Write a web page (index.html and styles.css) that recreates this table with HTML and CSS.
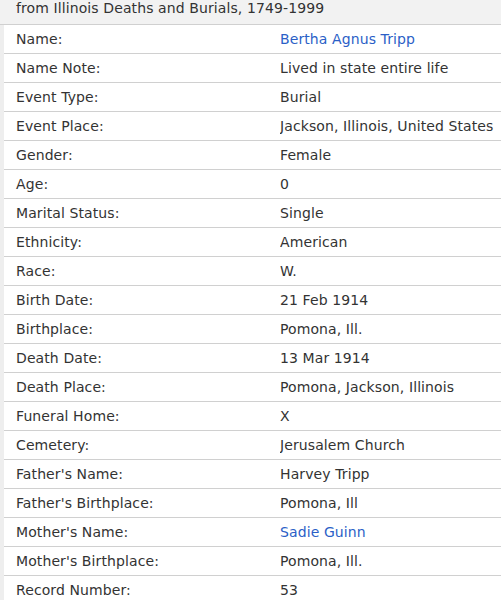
FILE: index.html
```html
<!DOCTYPE html>
<html>
<head>
<meta charset="utf-8">
<link rel="stylesheet" href="styles.css">
</head>
<body>
<div class="record">
  <div class="header">from Illinois Deaths and Burials, 1749-1999</div>
  <div class="rows">
    <div class="row"><div class="label">Name:</div><div class="value"><a class="link" href="#">Bertha Agnus Tripp</a></div></div>
    <div class="row"><div class="label">Name Note:</div><div class="value">Lived in state entire life</div></div>
    <div class="row"><div class="label">Event Type:</div><div class="value">Burial</div></div>
    <div class="row"><div class="label">Event Place:</div><div class="value">Jackson, Illinois, United States</div></div>
    <div class="row"><div class="label">Gender:</div><div class="value">Female</div></div>
    <div class="row"><div class="label">Age:</div><div class="value">0</div></div>
    <div class="row"><div class="label">Marital Status:</div><div class="value">Single</div></div>
    <div class="row"><div class="label">Ethnicity:</div><div class="value">American</div></div>
    <div class="row"><div class="label">Race:</div><div class="value">W.</div></div>
    <div class="row"><div class="label">Birth Date:</div><div class="value">21 Feb 1914</div></div>
    <div class="row"><div class="label">Birthplace:</div><div class="value">Pomona, Ill.</div></div>
    <div class="row"><div class="label">Death Date:</div><div class="value">13 Mar 1914</div></div>
    <div class="row"><div class="label">Death Place:</div><div class="value">Pomona, Jackson, Illinois</div></div>
    <div class="row"><div class="label">Funeral Home:</div><div class="value">X</div></div>
    <div class="row"><div class="label">Cemetery:</div><div class="value">Jerusalem Church</div></div>
    <div class="row"><div class="label">Father's Name:</div><div class="value">Harvey Tripp</div></div>
    <div class="row"><div class="label">Father's Birthplace:</div><div class="value">Pomona, Ill</div></div>
    <div class="row"><div class="label">Mother's Name:</div><div class="value"><a class="link" href="#">Sadie Guinn</a></div></div>
    <div class="row"><div class="label">Mother's Birthplace:</div><div class="value">Pomona, Ill.</div></div>
    <div class="row"><div class="label">Record Number:</div><div class="value">53</div></div>
  </div>
</div>
</body>
</html>
```
FILE: styles.css
```css
html, body {
  margin: 0;
  padding: 0;
  background: #ffffff;
}
body {
  font-family: "DejaVu Sans", Verdana, sans-serif;
  font-size: 14px;
  letter-spacing: 0.1px;
  color: #333333;
}
.record {
  width: 501px;
}
.header {
  background: #f2f2f2;
  height: 24px;
  line-height: 17px;
  padding-left: 16px;
  border-bottom: 1px solid #d0d0d0;
  box-sizing: content-box;
}
.rows {
  border-left: 4px solid #eeeeee;
}
.row {
  display: grid;
  grid-template-columns: 276px 1fr;
  height: 28px;
  line-height: 28px;
  border-bottom: 1px solid #d0d0d0;
  white-space: nowrap;
}
.label {
  padding-left: 12px;
}
.value {
  overflow: hidden;
}
.link {
  color: #2b5fc7;
  text-decoration: none;
}
```
